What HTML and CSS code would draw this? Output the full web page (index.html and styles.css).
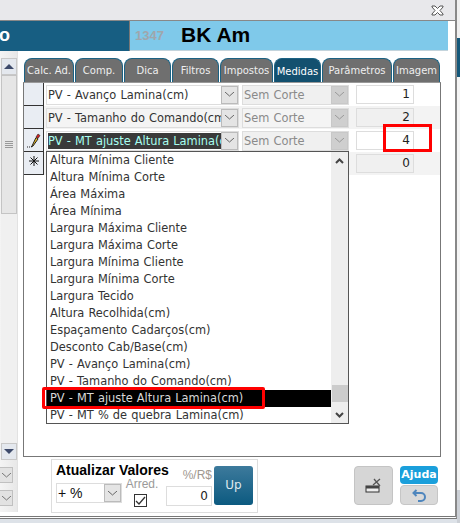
FILE: index.html
```html
<!DOCTYPE html>
<html lang="pt">
<head>
<meta charset="utf-8">
<title>Medidas</title>
<link rel="stylesheet" href="styles.css">
</head>
<body>
<div class="screen">
  <div class="window">
    <div class="titlebar">
      <svg class="close" width="13" height="11" viewBox="0 0 13 11"><path d="M1 1h3l2.500 2.500L9 1h3v1L9 5.500 12 9v1H9L6.500 7.500 4 10H1V9l3-3.500L1 2z" fill="#fff" stroke="#555" stroke-width="1"/></svg>
    </div>
    <div class="header">
      <div class="head-left">o</div>
      <div class="head-right"><span class="code">1347</span><span class="name">BK Am</span></div>
      <div class="head-gap"></div>
    </div>
    <div class="body">
      <div class="side">
        <div class="vscroll">
          <div class="vbtn"><span class="tri-up"></span></div>
          <div class="vthumb"><span class="grip"></span></div>
          <div class="vtrack"></div>
          <div class="vbtn"><span class="tri-down"></span></div>
        </div>
        <div class="side-combos">
          <div class="mini"><svg width="9" height="5" viewBox="0 0 9 5"><path d="M0 0l4.500 4L9 0" fill="none" stroke="#777"/></svg></div>
          <div class="mini"><svg width="9" height="5" viewBox="0 0 9 5"><path d="M0 0l4.500 4L9 0" fill="none" stroke="#777"/></svg></div>
        </div>
      </div>
      <div class="content">
        <div class="tabs">
          <div class="tab w50">Calc. Ad.</div>
          <div class="tab w48">Comp.</div>
          <div class="tab w47">Dica</div>
          <div class="tab w47">Filtros</div>
          <div class="tab w53">Impostos</div>
          <div class="tab w47 active">Medidas</div>
          <div class="tab w70">Parâmetros</div>
          <div class="tab w47">Imagem</div>
        </div>
        <div class="panel">
          <div class="row">
            <div class="ind"></div>
            <div class="combo wide"><span class="val">PV - Avanço Lamina(cm)</span><span class="arrow"><svg width="9" height="5" viewBox="0 0 9 5"><path d="M0 0l4.500 4L9 0" fill="none" stroke="#666"/></svg></span></div>
            <div class="combo cut"><span class="val">Sem Corte</span><span class="arrow off"><svg width="9" height="5" viewBox="0 0 9 5"><path d="M0 0l4.500 4L9 0" fill="none" stroke="#999"/></svg></span></div>
            <div class="num">1</div>
          </div>
          <div class="row alt">
            <div class="ind"></div>
            <div class="combo wide"><span class="val">PV - Tamanho do Comando(cm)</span><span class="arrow"><svg width="9" height="5" viewBox="0 0 9 5"><path d="M0 0l4.500 4L9 0" fill="none" stroke="#666"/></svg></span></div>
            <div class="combo cut"><span class="val">Sem Corte</span><span class="arrow off"><svg width="9" height="5" viewBox="0 0 9 5"><path d="M0 0l4.500 4L9 0" fill="none" stroke="#999"/></svg></span></div>
            <div class="num">2</div>
          </div>
          <div class="row">
            <div class="ind">
              <svg width="14" height="15" viewBox="0 0 14 15"><path d="M0 14h1M2 14h1" stroke="#222"/><path d="M5 13l-1 1 2-1 5-7-2-1.500z" fill="#f0c020" stroke="#222"/><path d="M9 4l2-3 2 1.500-2 3z" fill="#d02020" stroke="#222" stroke-width=".6"/></svg>
            </div>
            <div class="combo wide focus"><span class="val">PV - MT ajuste Altura Lamina(cm)</span><span class="arrow"><svg width="9" height="5" viewBox="0 0 9 5"><path d="M0 0l4.500 4L9 0" fill="none" stroke="#666"/></svg></span></div>
            <div class="combo cut"><span class="val">Sem Corte</span><span class="arrow off"><svg width="9" height="5" viewBox="0 0 9 5"><path d="M0 0l4.500 4L9 0" fill="none" stroke="#999"/></svg></span></div>
            <div class="num">4</div>
          </div>
          <div class="row alt">
            <div class="ind ind-new">
              <svg width="10" height="10" viewBox="0 0 10 10"><path d="M5 0v10M0 5h10M1.500 1.500l7 7M8.500 1.500l-7 7" stroke="#111"/></svg>
            </div>
            <div class="combo wide blank"></div>
            <div class="combo cut blank"></div>
            <div class="num">0</div>
          </div>

          <div class="dropdown">
            <ul class="list">
              <li>Altura Mínima Cliente</li>
              <li>Altura Mínima Corte</li>
              <li>Área Máxima</li>
              <li>Área Mínima</li>
              <li>Largura Máxima Cliente</li>
              <li>Largura Máxima Corte</li>
              <li>Largura Mínima Cliente</li>
              <li>Largura Mínima Corte</li>
              <li>Largura Tecido</li>
              <li>Altura Recolhida(cm)</li>
              <li>Espaçamento Cadarços(cm)</li>
              <li>Desconto Cab/Base(cm)</li>
              <li>PV - Avanço Lamina(cm)</li>
              <li>PV - Tamanho do Comando(cm)</li>
              <li class="sel">PV - MT ajuste Altura Lamina(cm)</li>
              <li>PV - MT % de quebra Lamina(cm)</li>
            </ul>
            <div class="dscroll">
              <svg class="chev" width="9" height="6" viewBox="0 0 9 6"><path d="M1 5l3.500-3.500L8 5" fill="none" stroke="#444" stroke-width="2"/></svg>
              <div class="dthumb"></div>
              <svg class="chev" width="9" height="6" viewBox="0 0 9 6"><path d="M1 1l3.500 3.500L8 1" fill="none" stroke="#444" stroke-width="2"/></svg>
            </div>
          </div>
          <div class="mark mark-num"></div>
          <div class="mark mark-item"></div>
        </div>
        <div class="footer">
          <div class="group">
            <div class="group-main">
              <div class="group-title">Atualizar Valores</div>
              <div class="group-combo"><span class="gval">+ %</span><span class="garrow"><svg width="9" height="5" viewBox="0 0 9 5"><path d="M0 0l4.500 4L9 0" fill="none" stroke="#666"/></svg></span></div>
            </div>
            <div class="arred">
              <span class="lbl">Arred.</span>
              <span class="check"><svg width="11" height="10" viewBox="0 0 11 10"><path d="M1 5l3 3 6-7" fill="none" stroke="#333" stroke-width="1.300"/></svg></span>
            </div>
            <div class="perc">
              <span class="lbl">%/R$</span>
              <span class="pval">0</span>
            </div>
            <div class="up">Up</div>
          </div>
          <div class="actions">
            <div class="act-big">
              <svg width="18" height="16" viewBox="0 0 18 16"><rect x="1" y="8" width="13" height="6" fill="#eee" stroke="#333"/><path d="M1 8h13v2.500H1z" fill="#444"/><path d="M8 7l7-6M9 1l6 7" stroke="#555" stroke-width="1.300"/></svg>
            </div>
            <div class="act-col">
              <div class="help">Ajuda</div>
              <div class="back">
                <svg width="15" height="13" viewBox="0 0 15 13"><path d="M4.500 1L1.500 4l3 3" fill="none" stroke="#4f86bd" stroke-width="2"/><path d="M2 4h7a4 4 0 0 1 0 8H6" fill="none" stroke="#4f86bd" stroke-width="2"/></svg>
              </div>
            </div>
          </div>
        </div>
      </div>
    </div>
  </div>
  <div class="behind"></div>
</div>
</body>
</html>
```

FILE: styles.css
```css
* { box-sizing: border-box; }
html, body { margin: 0; padding: 0; }
body {
  width: 460px;
  height: 523px;
  overflow: hidden;
  background: #dde2e8;
  font-family: "DejaVu Sans", sans-serif;
  font-size: 11.4px;
  word-spacing: .5px;
  color: #333;
}
.screen { display: flex; height: 523px; align-items: flex-start; }
.window {
  width: 457px;
  height: 519px;
  background: #fff;
  border-right: 2px solid #888;
  border-bottom: 3px double #777;
  display: flex;
  flex-direction: column;
}
.behind {
  width: 3px;
  height: 523px;
  background: linear-gradient(#f0f0f0 0 38px, #15587a 38px 77px, #f4f4f4 77px 490px, #ccd0d6 490px);
}
.titlebar {
  height: 20px;
  background: #e8e8eb;
  display: flex;
  justify-content: flex-end;
  align-items: center;
  padding: 1px 11px 0 0;
}
.header {
  height: 31px;
  display: flex;
  border-top: 1px solid #888;
  background: #fff;
}
.head-left {
  width: 130px;
  background: #175e82;
  border-right: 1px solid #777;
  color: #fff;
  font: bold 18px/28px "Liberation Sans", sans-serif;
  text-indent: -1px;
}
.head-right {
  width: 318px;
  background: #7fc9ea;
  border-bottom: 1px solid #c4d4dc;
  display: flex;
  align-items: center;
  padding: 0 0 2px 5px;
  font-family: "Liberation Sans", sans-serif;
  font-weight: bold;
}
.code { width: 46px; color: #a0a6ac; font-size: 13px; padding-top: 2px; }
.name { color: #000; font-size: 21px; word-spacing: 0; }
.head-gap { flex: 1; }
.body { flex: 1; display: flex; min-height: 0; }
.side {
  width: 18px;
  border-right: 1px solid #e2e2e2;
  background: linear-gradient(90deg, #f4f4f4, #e8e8e8);
  padding: 7px 0 0 1px;
  display: flex;
  flex-direction: column;
  margin-bottom: 4px;
}
.vscroll {
  height: 402px;
  width: 16px;
  display: flex;
  flex-direction: column;
  background: #f0f0f0;
}
.vbtn {
  height: 17px;
  background: #e4e8ee;
  border: 1px solid #c8c8c8;
  display: flex;
  align-items: center;
  justify-content: center;
}
.tri-up, .tri-down { width: 0; height: 0; border-left: 5px solid transparent; border-right: 5px solid transparent; }
.tri-up { border-bottom: 5px solid #3d4a6b; }
.tri-down { border-top: 5px solid #3d4a6b; }
.vthumb {
  height: 139px;
  background: #e6e6e6;
  border: 1px solid #c4c4c4;
  display: flex;
  align-items: center;
  justify-content: center;
}
.grip {
  width: 8px;
  height: 7px;
  background: repeating-linear-gradient(#999 0 1px, transparent 1px 2px);
}
.vtrack { flex: 1; }
.side-combos { margin-top: 7px; margin-left: -1px; display: flex; flex-direction: column; gap: 7px; }
.mini {
  width: 13px;
  height: 16px;
  background: #e2e2e2;
  border: 1px solid #c0c0c0;
  border-left: 0;
  display: flex;
  align-items: center;
  justify-content: center;
}
.content { flex: 1; padding: 7px 0 0 5px; display: flex; flex-direction: column; }
.tabs { display: flex; gap: 1px; height: 24px; padding-left: 1px; }
.tab {
  height: 24px;
  background: #6f6f6f;
  border: 2px solid #1c6283;
  border-width: 1px 1px 0 1px;
  border-radius: 8px 8px 0 0;
  color: #eee;
  font-size: 10px;
  word-spacing: 0;
  line-height: 23px;
  text-align: center;
  white-space: nowrap;
}
.tab.active { background: #13506f; color: #fff; line-height: 25px; }
.w47 { width: 47px; }
.w48 { width: 48px; }
.w50 { width: 50px; }
.w53 { width: 53px; }
.w70 { width: 70px; }
.panel {
  position: relative;
  width: 418px;
  height: 375px;
  border: 1px solid #777;
  border-top: 1px solid #999;
}
.row { height: 23px; display: flex; align-items: center; }
.row.alt { background: #f3f3f3; }
.ind {
  width: 20px;
  height: 23px;
  background: #e9edf3;
  border-right: 1px solid #333;
  border-bottom: 1px solid #333;
  display: flex;
  align-items: center;
  justify-content: center;
  flex: none;
}
.ind-new { align-items: flex-start; padding-top: 4px; }
.combo {
  height: 20px;
  display: flex;
  align-items: center;
  background: #fff;
  border: 1px solid #ddd;
  overflow: hidden;
}
.row.alt .combo { background: #f4f4f4; }
.combo.wide { width: 193px; margin-left: 2px; }
.combo.cut { width: 107px; margin-left: 3px; background: #f0f0f0; color: #8a8a8a; }
.combo.blank { visibility: hidden; }
.val { flex: 1; padding-left: 1px; white-space: nowrap; overflow: hidden; line-height: 18px; }
.focus .val { background: #3a3a3a; color: #a8fff0; margin: 1px 0 1px 1px; padding-left: 0; line-height: 16px; }
.arrow {
  width: 17px;
  height: 18px;
  flex: none;
  background: #e4e4e4;
  border: 1px solid #bbb;
  display: flex;
  align-items: center;
  justify-content: center;
}
.arrow.off { background: #cfcfcf; border-color: #c8c8c8; }
.num {
  width: 58px;
  height: 19px;
  margin-left: 7px;
  border: 1px solid #ddd;
  background: #fff;
  text-align: right;
  padding-right: 3px;
  line-height: 17px;
  font-size: 12px;
  color: #222;
}
.row.alt .num { background: #f0f0f0; }
.dropdown {
  position: absolute;
  left: 22px;
  top: 68px;
  width: 303px;
  height: 273px;
  background: #fff;
  border: 1px solid #555;
  display: flex;
}
.list { list-style: none; margin: 0; padding: 0; flex: 1; }
.list li { height: 17px; line-height: 17px; padding-left: 3px; white-space: nowrap; }
.list li.sel { background: #000; color: #d8d8d8; }
.dscroll { width: 17px; background: #eee; display: flex; flex-direction: column; align-items: center; padding-top: 6px; }
.dthumb { width: 16px; height: 17px; background: #ccc; margin: 221px 0 10px; }
.mark { position: absolute; border: 3px solid #f00; }
.mark-num { left: 359px; top: 41px; width: 49px; height: 28px; }
.mark-item { left: 18px; top: 304px; width: 223px; height: 22px; border-radius: 2px; }
.footer { display: flex; padding: 2px 0 0 28px; }
.group {
  width: 207px;
  height: 54px;
  border: 1px solid #ddd;
  background: #fff;
  display: flex;
}
.group-main { width: 70px; padding: 2px 0 0 4px; flex: none; }
.group-title {
  font: bold 14px/16px "Liberation Sans", sans-serif;
  color: #000;
  white-space: nowrap;
  word-spacing: 0;
  width: 70px;
}
.group-combo {
  width: 66px;
  height: 20px;
  margin: 5px 0 0 0;
  display: flex;
  border: 1px solid #ddd;
}
.gval { flex: 1; font-family: "Liberation Sans", sans-serif; font-size: 14px; word-spacing: 0; line-height: 18px; padding-left: 1px; color: #111; }
.garrow { width: 17px; background: #e4e4e4; border: 1px solid #bbb; display: flex; align-items: center; justify-content: center; }
.arred { width: 40px; padding-top: 17px; display: flex; flex-direction: column; align-items: center; flex: none; }
.lbl { font-family: "Liberation Sans", sans-serif; font-size: 12px; word-spacing: 0; color: #9a9a9a; line-height: 14px; }
.check { width: 13px; height: 13px; border: 1px solid #333; background: #fff; margin: 3px 4px 0 0; display: flex; align-items: center; justify-content: center; }
.perc { width: 46px; display: flex; flex-direction: column; align-items: flex-end; padding-top: 8px; flex: none; margin-left: 4px; }
.perc .lbl { line-height: 14px; margin-bottom: 4px; color: #a09890; }
.pval { width: 46px; height: 20px; border: 1px solid #ddd; text-align: right; padding-right: 3px; line-height: 18px; font-size: 12px; color: #222; }
.up {
  width: 39px;
  height: 39px;
  margin: 6px 0 0 2px;
  border-radius: 3px;
  background: linear-gradient(#3d7a9c, #0c5a80);
  color: #dfe8ee;
  font: 12px/39px "DejaVu Sans", sans-serif;
  text-align: center;
  flex: none;
}
.actions { display: flex; margin: 7px 0 0 96px; gap: 7px; }
.act-big {
  width: 39px;
  height: 39px;
  background: #d6d6d6;
  border: 1px solid #c4c4c4;
  border-radius: 4px;
  display: flex;
  align-items: center;
  justify-content: center;
}
.act-col { width: 38px; display: flex; flex-direction: column; gap: 1px; }
.help {
  height: 18px;
  background: #1a9fdb;
  border-radius: 4px;
  color: #fff;
  font: bold 11px/18px "DejaVu Sans", sans-serif;
  text-align: center;
}
.back {
  height: 20px;
  background: #d9d9d9;
  border: 1px solid #c6c6c6;
  border-radius: 4px;
  display: flex;
  align-items: center;
  justify-content: center;
}
```
